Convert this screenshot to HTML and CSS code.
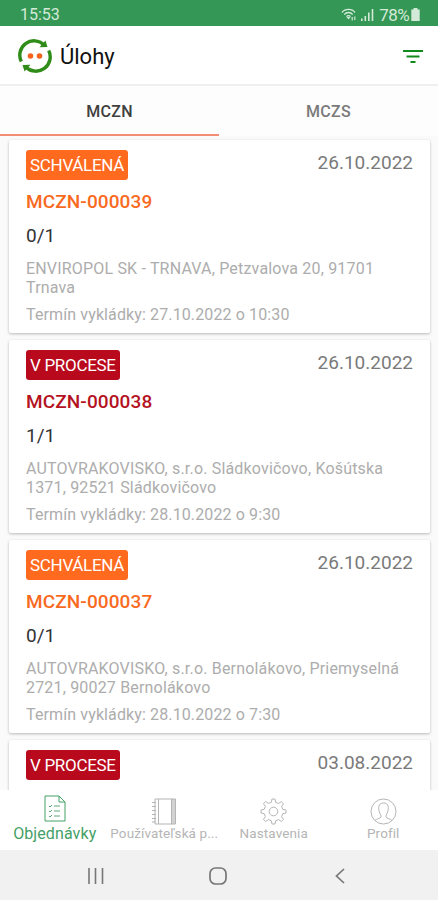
FILE: index.html
```html
<!DOCTYPE html>
<html lang="sk">
<head>
  <meta charset="UTF-8">
  <meta name="viewport" content="width=device-width, initial-scale=1.0">
  <title>Úlohy</title>
  <link rel="stylesheet" href="styles.css">
</head>
<body>
  <div class="app">
    <div class="status-bar">
      <span class="time">15:53</span>
      <div class="status-icons">
        <svg class="wifi" width="16" height="14" viewBox="0 0 16 14" fill="none" stroke="currentColor" stroke-width="1.3">
          <path d="M1 4.5C4 .3 11 .3 14 4.5M3.3 6.6C5.5 3.8 9.5 3.8 11.7 6.6M5.5 8.6c1-1.2 3-1.2 4 0"/>
          <path d="M5.500 9h4l-2 2.500z" fill="currentColor" stroke="none"/>
          <path d="M11.200 12.500V9M13.800 8.500V12" stroke-width="1.200"/>
        </svg>
        <svg class="signal" width="13" height="12" viewBox="0 0 13 12" fill="currentColor">
          <path d="M0 9.500h1.600V12H0zM3.500 7h1.600v5H3.500zM7 3.500h1.600V12H7zM10.700 0h1.600v12h-1.600z"/>
        </svg>
        <span class="percent">78%</span>
        <svg class="battery" width="9" height="13" viewBox="0 0 9 13" fill="currentColor">
          <path d="M2.500 0h4v1.500h2.200V13H.3V1.500h2.200z"/>
        </svg>
      </div>
    </div>

    <header class="app-bar">
      <svg class="logo" width="34" height="34" viewBox="0 0 34 34">
        <g fill="none" stroke="#2f8c18" stroke-width="3.400">
          <path d="M3.300 22.500A14.300 14.300 0 0 1 26 5.800"/>
          <path d="M30.700 11.500A14.300 14.300 0 0 1 8 28.200"/>
        </g>
        <path d="M27.500 1.500l2 6.500-8 .2z" fill="#2f8c18"/>
        <path d="M6.500 32.500l-2-6.500 8-.2z" fill="#2f8c18"/>
        <circle cx="12.500" cy="17" r="2.800" fill="#f4631e"/>
        <circle cx="21.500" cy="17" r="2.800" fill="#f4631e"/>
      </svg>
      <h1>Úlohy</h1>
      <svg class="filter" width="20" height="13" viewBox="0 0 20 13" fill="none" stroke="#128a1e" stroke-width="2">
        <path d="M0 1h20M3.500 6.500h13M7.500 12h5"/>
      </svg>
    </header>

    <nav class="tabs">
      <div class="tab active">MCZN</div>
      <div class="tab">MCZS</div>
    </nav>

    <main class="list">
      <div class="card approved">
        <div class="card-top">
          <span class="badge">SCHVÁLENÁ</span>
          <span class="date">26.10.2022</span>
        </div>
        <h2>MCZN-000039</h2>
        <div class="count">0/1</div>
        <p class="address">ENVIROPOL SK - TRNAVA, Petzvalova 20, 91701<br>Trnava</p>
        <p class="term">Termín vykládky: 27.10.2022 o 10:30</p>
      </div>

      <div class="card process">
        <div class="card-top">
          <span class="badge">V PROCESE</span>
          <span class="date">26.10.2022</span>
        </div>
        <h2>MCZN-000038</h2>
        <div class="count">1/1</div>
        <p class="address">AUTOVRAKOVISKO, s.r.o. Sládkovičovo, Košútska<br>1371, 92521 Sládkovičovo</p>
        <p class="term">Termín vykládky: 28.10.2022 o 9:30</p>
      </div>

      <div class="card approved">
        <div class="card-top">
          <span class="badge">SCHVÁLENÁ</span>
          <span class="date">26.10.2022</span>
        </div>
        <h2>MCZN-000037</h2>
        <div class="count">0/1</div>
        <p class="address">AUTOVRAKOVISKO, s.r.o. Bernolákovo, Priemyselná<br>2721, 90027 Bernolákovo</p>
        <p class="term">Termín vykládky: 28.10.2022 o 7:30</p>
      </div>

      <div class="card process">
        <div class="card-top">
          <span class="badge">V PROCESE</span>
          <span class="date">03.08.2022</span>
        </div>
      </div>
    </main>

    <nav class="bottom-nav">
      <div class="nav-item active">
        <svg width="22" height="27" viewBox="0 0 22 27" fill="none" stroke="currentColor" stroke-width="1">
          <path d="M1 1h14l6 6v19H1zM15 1v6h6"/>
          <path d="M5 11l1 1 2-2M10 11h6M5 16l1 1 2-2M10 16h6M5 21l1 1 2-2M10 21h6" stroke-width="0.900"/>
        </svg>
        <span>Objednávky</span>
      </div>
      <div class="nav-item">
        <svg width="26" height="27" viewBox="0 0 26 27" fill="none" stroke="currentColor" stroke-width="1">
          <path d="M4 1h17v25H4zM7.500 1v25"/>
          <path d="M20.500 1h4v25h-4z" fill="#d2d2d2"/>
          <path d="M1 4.500h4M1 8.500h4M1 12.500h4M1 16.500h4M1 20.500h4M1 24h4"/>
        </svg>
        <span>Používateľská p...</span>
      </div>
      <div class="nav-item">
        <svg width="27" height="27" viewBox="0 0 27 27" fill="none" stroke="currentColor" stroke-width="1" stroke-linejoin="round">
          <path d="M11.300 4.300L12 1h3l.7 3.300 2.900 1.200 2.800-1.900 2.100 2.100-1.900 2.800 1.200 2.900L26 12v3l-3.200.7-1.200 2.900 1.900 2.800-2.100 2.100-2.800-1.900-2.900 1.200L15 26h-3l-.7-3.200-2.900-1.200-2.800 1.900-2.100-2.100 1.900-2.800-1.200-2.900L1 15v-3l3.200-.7 1.200-2.900-1.900-2.800 2.100-2.100 2.800 1.900z"/>
          <circle cx="13.500" cy="13.500" r="4.300"/>
        </svg>
        <span>Nastavenia</span>
      </div>
      <div class="nav-item">
        <svg width="27" height="27" viewBox="0 0 27 27" fill="none" stroke="currentColor" stroke-width="1">
          <circle cx="13.500" cy="13.500" r="12.500"/>
          <path d="M5 22.500c1.500-1.800 5.500-2 6-3.500.3-1.500-.5-2.500-1.300-4C8 10 8 5 13.500 5s5.500 5 3.800 10c-.8 1.500-1.600 2.500-1.300 4 .5 1.500 4.500 1.700 6 3.500"/>
        </svg>
        <span>Profil</span>
      </div>
    </nav>

    <div class="system-bar">
      <svg width="18" height="16" viewBox="0 0 18 16" fill="none" stroke="currentColor" stroke-width="1.600">
        <path d="M2 0v16M8.500 0v16M15.500 0v16"/>
      </svg>
      <svg class="home" width="18" height="18" viewBox="0 0 18 18" fill="none" stroke="currentColor" stroke-width="1.700">
        <rect x="1" y="1" width="16" height="16" rx="5.500"/>
      </svg>
      <svg width="10" height="16" viewBox="0 0 10 16" fill="none" stroke="currentColor" stroke-width="1.700">
        <path d="M9 1L1.500 8 9 15"/>
      </svg>
    </div>
  </div>
</body>
</html>
```

FILE: styles.css
```css
* {
  box-sizing: border-box;
}

body {
  margin: 0;
  font-family: Roboto, sans-serif;
  background-color: #fafafa;
}

h1, h2, p {
  margin: 0;
}

svg {
  display: block;
  flex-shrink: 0;
}

.app {
  display: flex;
  flex-direction: column;
  height: 900px;
  overflow: hidden;
}

.status-bar {
  display: flex;
  justify-content: space-between;
  align-items: center;
  height: 26px;
  padding: 3px 18px 0 20px;
  background-color: #359755;
  color: #d3ead9;
  font-size: 16px;
  flex-shrink: 0;
}

.status-icons {
  display: flex;
  align-items: center;
}

.signal {
  margin-left: 4px;
}

.percent {
  margin-left: 5px;
  font-size: 17px;
  letter-spacing: -0.6px;
}

.battery {
  margin-left: 2px;
}

.app-bar {
  display: flex;
  align-items: center;
  height: 60px;
  padding: 2px 15px 0 18px;
  background-color: #fff;
  border-bottom: 2px solid #f0f0f0;
  flex-shrink: 0;
}

.app-bar h1 {
  flex: 1;
  margin-left: 8px;
  font-size: 22px;
  font-weight: 400;
  color: #111;
}

.tabs {
  display: flex;
  height: 50px;
  background-color: #fdfdfd;
  flex-shrink: 0;
}

.tab {
  flex: 1;
  display: flex;
  align-items: center;
  justify-content: center;
  padding-top: 3px;
  border-bottom: 2px solid transparent;
  font-size: 16px;
  font-weight: 500;
  letter-spacing: 0.3px;
  color: #7a7a7a;
}

.tab.active {
  color: #404040;
  border-bottom-color: #f38d76;
}

.list {
  flex: 1;
  min-height: 0;
  display: flex;
  flex-direction: column;
  gap: 7px;
  padding: 4px 8px 0 9px;
  overflow: hidden;
}

.card {
  height: 193px;
  padding: 10px 17px 0;
  background-color: #fff;
  border-radius: 2px;
  box-shadow: 0 1px 3px rgba(0, 0, 0, 0.27);
  flex-shrink: 0;
}

.card-top {
  display: flex;
  justify-content: space-between;
  align-items: flex-start;
}

.badge {
  height: 30px;
  padding: 0 4px;
  border-radius: 3px;
  font-size: 17px;
  line-height: 31px;
  letter-spacing: -0.3px;
  color: #fff;
}

.approved .badge {
  background-color: #ff6a1f;
}

.process .badge {
  background-color: #b9091c;
}

.date {
  font-size: 19px;
  line-height: 26px;
  color: #7a7a7a;
}

.card h2 {
  margin-top: 11px;
  font-size: 19px;
  font-weight: 500;
  line-height: 22px;
  letter-spacing: 0.1px;
}

.approved h2 {
  color: #f96a1f;
}

.process h2 {
  color: #b5121f;
}

.count {
  margin-top: 12px;
  font-size: 19px;
  line-height: 22px;
  color: #333;
}

.address,
.term {
  font-size: 16px;
  line-height: 19px;
  letter-spacing: 0.18px;
  color: #adadad;
  white-space: nowrap;
}

.address {
  margin-top: 12px;
}

.term {
  margin-top: 8px;
  letter-spacing: 0.12px;
}

.bottom-nav {
  display: flex;
  height: 60px;
  background-color: #fff;
  flex-shrink: 0;
}

.nav-item {
  flex: 1;
  display: flex;
  flex-direction: column;
  align-items: center;
  padding-top: 8px;
  color: #b5b5b5;
  font-size: 13.5px;
  line-height: 17px;
  letter-spacing: 0.1px;
  white-space: nowrap;
}

.nav-item.active {
  padding-top: 5px;
  color: #45a067;
  font-size: 16px;
  line-height: 23px;
}

.system-bar {
  display: flex;
  justify-content: space-between;
  align-items: center;
  height: 50px;
  padding: 2px 93px 0 87px;
  background-color: #f1f1f1;
  color: #777;
  flex-shrink: 0;
}

.home {
  margin-right: 5px;
}
```
